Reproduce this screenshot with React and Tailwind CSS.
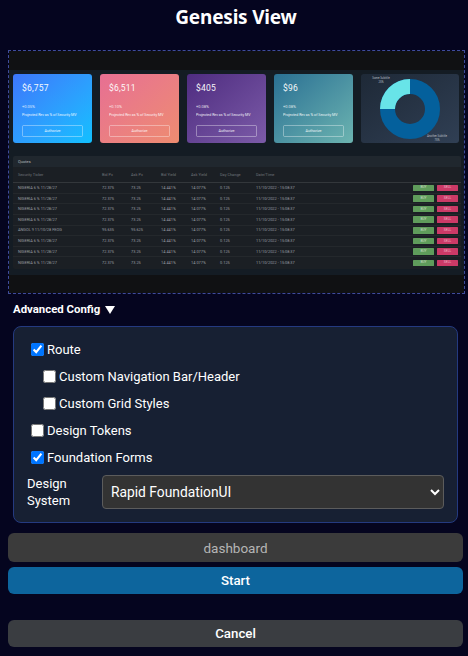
import React from "react";

const cards = [
  { v: "$6,757", p: "+0.05%", bg: "bg-gradient-to-br from-[#3c76fb] to-[#0fc0ff]" },
  { v: "$6,511", p: "+0.10%", bg: "bg-gradient-to-br from-[#e76f93] to-[#ee8c70]" },
  { v: "$405", p: "+0.08%", bg: "bg-gradient-to-br from-[#4f2c80] to-[#7c5ba8]" },
  { v: "$96", p: "+0.08%", bg: "bg-gradient-to-br from-[#2a7093] to-[#6cb4b0]" },
];

const rows = [0, 1, 2, 3, 4, 5, 6, 7];
const cols = "grid grid-cols-[84px_29px_30px_30px_29px_36px_1fr_21px_24px] gap-x-0 items-center";

function Card({ c }) {
  return (
    <div className={`${c.bg} w-[79px] h-[69px] shrink-0 rounded-[3px] px-[9px] pt-[8px] flex flex-col text-white`}>
      <div className="text-[8.5px] leading-[12px] font-['Roboto',sans-serif] tracking-[0.2px] opacity-95">{c.v}</div>
      <div className="text-[4px] leading-[5px] mt-[10px] opacity-80 font-['Roboto',sans-serif]">{c.p}</div>
      <div className="text-[3.6px] leading-[5px] mt-[4px] opacity-90 whitespace-nowrap font-['Roboto',sans-serif]">Projected Rev as % of Security MV</div>
      <div className="mt-[7px] h-[12px] w-[61px] rounded-[1.5px] border border-white/40 flex items-center justify-center text-[3.8px] opacity-90 font-['Roboto',sans-serif]">Authorize</div>
    </div>
  );
}

function Donut() {
  return (
    <div className="relative flex-1 h-[69px] rounded-[3px] bg-gradient-to-br from-[#1e2937] to-[#303f54] flex items-center justify-center">
      <svg width="60" height="60" viewBox="0 0 60 60">
        <circle cx="30" cy="30" r="22.5" fill="none" stroke="#04609c" strokeWidth="15" />
        <path d="M30 0 A30 30 0 0 0 0 30 L15 30 A15 15 0 0 1 30 15 Z" fill="#68e4e8" />
      </svg>
      <div className="absolute left-[8px] top-[2px] w-[24px] text-center text-[2.8px] leading-[4px] text-[#b9bec4] font-['Roboto',sans-serif] whitespace-nowrap">
        Some Subtitle<br />25%
      </div>
      <div className="absolute right-[9px] bottom-[1px] w-[26px] text-center text-[2.8px] leading-[4px] text-[#b9bec4] font-['Roboto',sans-serif] whitespace-nowrap">
        Another Subtitle<br />75%
      </div>
    </div>
  );
}

function Quotes() {
  const headers = ["Security Ticker", "Bid Px", "Ask Px", "Bid Yield", "Ask Yield", "Day Change", "Date/Time"];
  return (
    <div className="mt-[13px] ml-[4px] mr-[3px] pb-[1px] rounded-[2px] bg-[#1b1f24] text-[#9a9ea3] font-['Roboto',sans-serif]">
      <div className="h-[11px] px-[5px] rounded-t-[2px] bg-[#20272e] flex items-center text-[4px] text-[#b5b9bc]">Quotes</div>
      <div className={`${cols} h-[16px] pl-[5px] pr-[3px] border-b border-[#33373b] text-[3.9px] text-[#6f7479]`}>
        {headers.map((h) => (
          <div key={h} className="whitespace-nowrap">{h}</div>
        ))}
      </div>
      {rows.map((i) => (
        <div key={i} className={`${cols} h-[10.65px] pl-[5px] pr-[3px] border-b border-[#24282c] last:border-b-0 text-[3.9px]`}>
          <div className="whitespace-nowrap">{i === 4 ? "ANGOL 9 11/10/28 FEOG" : "NIGERIA 6 % 11/28/27"}</div>
          <div>{i === 4 ? "95.635" : "72.375"}</div>
          <div>{i === 4 ? "95.625" : "73.25"}</div>
          <div>14.441%</div>
          <div>14.077%</div>
          <div>0.125</div>
          <div className="whitespace-nowrap">11/10/2022 - 15:08:37</div>
          <div className="h-[6.5px] w-[21px] rounded-[0.5px] bg-[#5f9c5b] flex items-center justify-center text-[3.3px] text-[#c9dcc7]">BUY</div>
          <div className="h-[6.5px] w-[21px] ml-[3px] rounded-[0.5px] bg-[#cc3a67] flex items-center justify-center text-[3.3px] text-[#eebccb]">SELL</div>
        </div>
      ))}
    </div>
  );
}

function Check({ label, checked, indent }) {
  return (
    <label className={`h-[27px] flex items-center gap-[3px] ${indent ? "pl-[12px]" : ""}`}>
      <input type="checkbox" defaultChecked={checked} className="w-[13px] h-[13px] m-[0] accent-[#0075ff] [color-scheme:light]" />
      <span className="text-[13px] leading-[18px] text-white font-['Roboto',sans-serif]">{label}</span>
    </label>
  );
}

export default function App() {
  return (
    <div className="w-[468px] h-[656px] overflow-hidden bg-[#05051f] px-[8px] font-['Roboto',sans-serif] text-white">
      <h1 className="h-[50px] pt-[4px] pl-[4px] text-center text-[19px] leading-[26px] font-bold font-['Noto_Sans',sans-serif] tracking-[-0.2px]">Genesis View</h1>

      <div className="w-[457px] h-[244px] border border-dashed border-[#3f4c9c] flex flex-col">
        <div className="h-[19px] bg-[#101113]" />
        <div className="flex-1 bg-[#141c24] pt-[4px]">
          <div className="flex gap-[8px] pl-[4px] pr-[5px]">
            {cards.map((c) => (
              <Card key={c.v} c={c} />
            ))}
            <Donut />
          </div>
          <Quotes />
        </div>
        <div className="h-[18px] bg-[#101113]" />
      </div>

      <div className="h-[32px] pl-[5px] flex items-center gap-[5px] text-[11.4px] font-bold">
        <span>Advanced Config</span>
        <svg width="10" height="8" viewBox="0 0 10 8"><path d="M0 0 H10 L5 8 Z" fill="#fff" /></svg>
      </div>

      <div className="ml-[5px] w-[445px] h-[197px] rounded-[8px] border border-[#243a80] bg-[#172033] pl-[17px] pr-[13px] pt-[9px]">
        <Check label="Route" checked />
        <Check label="Custom Navigation Bar/Header" indent />
        <Check label="Custom Grid Styles" indent />
        <Check label="Design Tokens" />
        <Check label="Foundation Forms" checked />
        <div className="mt-[4px] -ml-[4px] flex items-center">
          <div className="w-[75px] text-[13px] leading-[17px] text-white">Design System</div>
          <select defaultValue="Rapid FoundationUI" className="w-[342px] h-[34px] rounded-[4px] border border-[#5c5c5c] bg-[#333333] pl-[4px] pr-[2px] text-[13.8px] text-white [color-scheme:dark]">
            <option>Rapid FoundationUI</option>
          </select>
        </div>
      </div>

      <input
        readOnly
        value="dashboard"
        className="mt-[10px] block w-[455px] h-[29px] rounded-[6px] bg-[#3b3b3b] text-center text-[13.5px] text-[#b5b5b5] outline-none"
      />
      <button className="mt-[5px] block w-[455px] h-[27px] rounded-[6px] bg-[#0d659d] text-center text-[13.3px] font-medium text-white font-['Roboto',sans-serif]">Start</button>
      <button className="mt-[26px] block w-[455px] h-[27px] rounded-[6px] bg-[#3a3d41] text-center text-[13.3px] font-medium text-white font-['Roboto',sans-serif]">Cancel</button>
    </div>
  );
}
